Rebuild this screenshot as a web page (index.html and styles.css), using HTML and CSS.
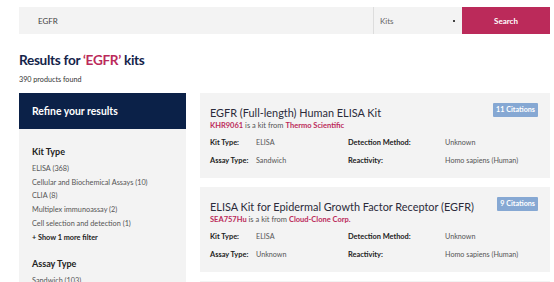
FILE: index.html
```html
<!DOCTYPE html>
<html>
<head>
<meta charset="utf-8">
<link rel="stylesheet" href="styles.css">
</head>
<body>
<div class="page">
  <form class="search">
    <div class="search-input">EGFR</div>
    <div class="search-select"><span>Kits</span><span class="caret"></span></div>
    <div class="search-btn">Search</div>
  </form>
  <h1 class="results-title">Results for <span class="hl">‘EGFR’</span> kits</h1>
  <div class="count">390 products found</div>
  <div class="main">
    <aside class="sidebar">
      <div class="refine">Refine your results</div>
      <div class="filters">
        <div class="filter-group">
          <h3>Kit Type</h3>
          <ul>
            <li>ELISA (368)</li>
            <li>Cellular and Biochemical Assays (10)</li>
            <li>CLIA (8)</li>
            <li>Multiplex immunoassay (2)</li>
            <li>Cell selection and detection (1)</li>
            <li class="more">+ Show 1 more filter</li>
          </ul>
        </div>
        <div class="filter-group">
          <h3>Assay Type</h3>
          <ul>
            <li>Sandwich (103)</li>
          </ul>
        </div>
      </div>
    </aside>
    <section class="results">
      <article class="card">
        <div class="card-head">
          <h2>EGFR (Full-length) Human ELISA Kit</h2>
          <span class="badge">11 Citations</span>
        </div>
        <div class="sub"><b>KHR9061</b> is a kit from <b>Thermo Scientific</b></div>
        <div class="specs">
          <span class="lbl">Kit Type:</span><span class="val">ELISA</span>
          <span class="lbl">Detection Method:</span><span class="val">Unknown</span>
          <span class="lbl">Assay Type:</span><span class="val">Sandwich</span>
          <span class="lbl">Reactivity:</span><span class="val">Homo sapiens (Human)</span>
        </div>
      </article>
      <article class="card">
        <div class="card-head">
          <h2>ELISA Kit for Epidermal Growth Factor Receptor (EGFR)</h2>
          <span class="badge">9 Citations</span>
        </div>
        <div class="sub"><b>SEA757Hu</b> is a kit from <b>Cloud-Clone Corp.</b></div>
        <div class="specs">
          <span class="lbl">Kit Type:</span><span class="val">ELISA</span>
          <span class="lbl">Detection Method:</span><span class="val">Unknown</span>
          <span class="lbl">Assay Type:</span><span class="val">Unknown</span>
          <span class="lbl">Reactivity:</span><span class="val">Homo sapiens (Human)</span>
        </div>
      </article>
      <article class="card"></article>
    </section>
  </div>
</div>
</body>
</html>
```

FILE: styles.css
```css
* { box-sizing: border-box; margin: 0; padding: 0; }
html, body { background: #fff; }
body {
  font-family: Lato, "Open Sans", sans-serif;
  color: #333;
  overflow: hidden;
  height: 282px;
}
.page {
  padding: 7px 4px 0 19px;
}
.search {
  display: flex;
  height: 27px;
  background: #f3f3f3;
}
.search-input {
  flex: 1;
  padding-left: 19px;
  display: flex;
  align-items: center;
  font-size: 8px;
  color: #444;
}
.search-select {
  width: 89px;
  border-left: 1px solid #ddd;
  display: flex;
  align-items: center;
  justify-content: space-between;
  padding: 0 7px 0 6px;
  font-size: 8px;
  color: #666;
}
.caret {
  width: 2px; height: 2px; background: #444;
}
.search-btn {
  width: 88px;
  background: #bb2a5a;
  color: #fff;
  font-weight: bold;
  font-size: 8px;
  display: flex;
  align-items: center;
  justify-content: center;
}
.results-title {
  margin-top: 16px;
  font-size: 13.6px;
  letter-spacing: -0.3px;
  font-weight: bold;
  color: #14244a;
  line-height: 20px;
}
.hl { color: #bb2a5a; }
.count {
  margin-top: 5px;
  font-size: 7.2px;
  color: #333;
  line-height: 10px;
}
.main {
  display: flex;
  gap: 14px;
  margin-top: 8px;
}
.sidebar {
  width: 167px;
  flex: none;
}
.refine {
  background: #0b2148;
  color: #fff;
  font-weight: bold;
  font-size: 10.4px;
  height: 36px;
  padding-left: 13px;
  display: flex;
  align-items: center;
}
.filters {
  background: #f3f3f3;
  padding: 17px 13px 10px;
  height: 200px;
}
.filter-group h3 {
  font-size: 9px;
  font-weight: bold;
  color: #222;
  line-height: 12px;
  margin-bottom: 4px;
}
.filter-group ul { list-style: none; }
.filter-group li {
  font-size: 7.3px;
  color: #555;
  line-height: 13.7px;
}
.filter-group li.more { color: #222; font-weight: bold; }
.filter-group + .filter-group { margin-top: 14px; }
.results {
  flex: 1;
  display: flex;
  flex-direction: column;
  gap: 9px;
}
.card {
  background: #f3f3f3;
  padding: 10px 12px 12px 10px;
  height: 85px;
  flex: none;
}
.card-head {
  display: flex;
  justify-content: space-between;
  align-items: flex-start;
}
.card-head h2 {
  font-size: 10.9px;
  font-weight: normal;
  color: #2b2b3a;
  line-height: 17px;
  margin-top: 1px;
}
.badge {
  background: #86a8d3;
  color: #fff;
  font-size: 7.2px;
  font-weight: bold;
  height: 14px;
  line-height: 14px;
  padding: 0 3px;
  border-radius: 1px;
}
.sub {
  font-size: 7.5px;
  color: #555;
  line-height: 10px;
  margin-top: 0;
}
.sub b { color: #bb2a5a; }
.specs {
  display: grid;
  grid-template-columns: 46px 92px 97px auto;
  row-gap: 8px;
  margin-top: 7px;
  font-size: 7.5px;
  line-height: 10px;
}
.lbl { font-weight: bold; color: #222; font-size: 7.4px; }
.val { color: #555; font-size: 7.2px; }
```
